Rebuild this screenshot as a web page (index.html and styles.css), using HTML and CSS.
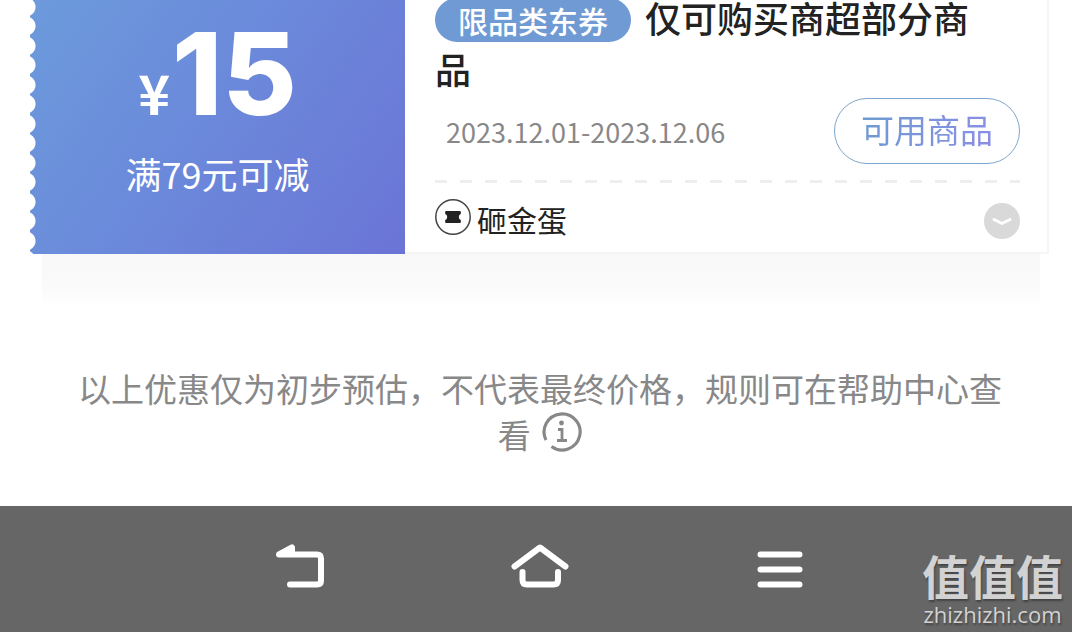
FILE: index.html
```
<!DOCTYPE html>
<html lang="zh-CN">
<head>
<meta charset="utf-8">
<meta name="viewport" content="width=device-width, initial-scale=1.0">
<title>优惠券</title>
<link rel="stylesheet" href="styles.css">
</head>
<body>

<main class="content">
  <section class="coupon">
    <div class="coupon-amount">
      <p class="price"><span class="currency">¥</span>15</p>
      <p class="condition">满79元可减</p>
    </div>
    <div class="coupon-info">
      <h2 class="title"><span class="tag">限品类东券</span>仅可购买商超部分商品</h2>
      <div class="date-row">
        <span class="date">2023.12.01-2023.12.06</span>
        <button class="use-button" type="button"><span>可用商品</span></button>
      </div>
      <div class="divider"></div>
      <div class="source-row">
        <svg class="source-icon" viewBox="0 0 36 36">
          <circle cx="18" cy="18" r="17.2" fill="none" stroke="#444" stroke-width="1.5"/>
          <path d="M11 12h14q.8 0 .8.8v2.200q-2 .6-2 3t2 3v2.200q0 .8-.8.8H11q-.8 0-.8-.8V21q2-.6 2-3t-2-3v-2.200q0-.8.8-.8z" fill="#222"/>
        </svg>
        <span class="source">砸金蛋</span>
        <button class="expand" type="button" aria-label="展开">
          <svg viewBox="0 0 36 36"><path d="M10 16.500l8 4 8-4" fill="none" stroke="#fff" stroke-width="3" stroke-linecap="round" stroke-linejoin="round"/></svg>
        </button>
      </div>
    </div>
  </section>
  <div class="coupon-shadow"></div>

  <p class="note">以上优惠仅为初步预估，不代表最终价格，规则可在帮助中心查看
    <svg class="info-icon" viewBox="0 0 40 40">
      <path d="M4 28A18 18 0 1 1 9.500 34.500" fill="none" stroke="#888" stroke-width="3.200"/>
      <circle cx="19.500" cy="11" r="2.400" fill="#888"/>
      <path d="M16 17.500h4v10.500M15 28.500h10" fill="none" stroke="#888" stroke-width="2.800"/>
    </svg>
  </p>
</main>

<nav class="navbar">
  <button class="nav-button" type="button" aria-label="返回">
    <svg viewBox="0 0 60 60"><path d="M20 41.500h27q4 0 4-4v-22q0-4-4-4H9L22 4.500V10"/></svg>
  </button>
  <button class="nav-button" type="button" aria-label="主页">
    <svg viewBox="0 0 60 60"><path d="M4.500 23.500L30 4.500l25.500 19M12.500 29v8q0 4.500 4.500 4.500h26.500q4.500 0 4.500-4.500v-8"/></svg>
  </button>
  <button class="nav-button" type="button" aria-label="菜单">
    <svg viewBox="0 0 60 60"><path d="M10.500 11.500h39M10.500 26.500h39M10.500 41.500h39"/></svg>
  </button>
  <div class="watermark">
    <span class="watermark-name">值值值</span>
    <span class="watermark-site">zhizhizhi.com</span>
  </div>
</nav>

</body>
</html>
```
FILE: styles.css
```
* {
  box-sizing: border-box;
}

body {
  margin: 0;
  min-height: 100vh;
  display: flex;
  flex-direction: column;
  overflow: hidden;
  background-color: #fff;
  color: #222;
  font-family: "Noto Sans CJK SC", sans-serif;
}

p,
h2 {
  margin: 0;
}

button {
  border: none;
  padding: 0;
  background: none;
  font-family: inherit;
  cursor: pointer;
}

svg {
  display: block;
}

.content {
  flex: 1;
}

/* the top of the coupon is scrolled out of view */
.coupon {
  display: flex;
  margin: -8px 23px 0 30px;
}

/* white circles make the torn left edge */
.coupon-amount {
  width: 375px;
  flex-shrink: 0;
  padding-top: 24px;
  text-align: center;
  color: #fff;
  background:
    radial-gradient(circle at -4px 10px, #fff 9px, transparent 10px) 0 5px / 12px 39px repeat-y,
    radial-gradient(circle at -4px 29px, #fff 9px, transparent 10px) 0 5px / 12px 39px repeat-y,
    linear-gradient(125deg, #6c9bdc 0%, #6b86da 55%, #6b74d6 100%);
}

.price {
  font: 800 114px/116px Inter, sans-serif;
}

.currency {
  margin-right: 2px;
  font: 700 54px/54px "Noto Sans CJK SC", sans-serif;
}

.condition {
  margin-top: 14px;
  font-size: 36px;
  line-height: 54px;
}

.coupon-info {
  flex: 1;
  padding: 0 27px 11px 30px;
  border-right: 2px solid #f5f5f5;
  border-bottom: 2px solid #f5f5f5;
}

.title {
  padding-right: 20px;
  font-size: 36px;
  line-height: 51px;
  font-weight: 500;
}

.tag {
  display: inline-block;
  margin-right: 14px;
  padding: 0 23px;
  border-radius: 22px;
  background-color: #6f9ad3;
  color: #fff;
  font-size: 30px;
  line-height: 44px;
}

.date-row {
  display: flex;
  align-items: center;
  justify-content: space-between;
  margin-top: 4px;
  padding-left: 11px;
}

.date {
  color: #888;
  font-size: 27px;
}

.use-button {
  height: 66px;
  padding: 0 26px 4px;
  border: 1px solid #7fa6cc;
  border-radius: 33px;
  font-size: 33px;
}

.use-button span {
  background: linear-gradient(110deg, #6c9bd2, #8b8ee6);
  background-clip: text;
  color: transparent;
}

.divider {
  height: 3px;
  margin-top: 16px;
  background: repeating-linear-gradient(90deg, #eee 0, #eee 12px, transparent 12px, transparent 25px);
}

.source-row {
  display: flex;
  align-items: center;
  margin-top: 14px;
}

.source-icon {
  width: 36px;
  height: 36px;
  margin-bottom: 4px;
}

.source {
  margin-left: 6px;
  font-size: 30px;
  line-height: 44px;
}

.expand {
  width: 36px;
  height: 36px;
  margin-top: 4px;
  margin-left: auto;
  border-radius: 50%;
  background-color: #d9d9d9;
}

.coupon-shadow {
  height: 52px;
  margin: 0 32px 0 42px;
  background: linear-gradient(#f8f8f8, #fafafa 60%, #fff);
}

.note {
  padding: 59px 66px 0 74px;
  text-align: center;
  color: #888;
  font-size: 33px;
  line-height: 46px;
}

.info-icon {
  display: inline-block;
  width: 40px;
  height: 40px;
  margin-left: 4px;
  vertical-align: -4px;
}

.navbar {
  position: relative;
  display: flex;
  justify-content: center;
  gap: 180px;
  height: 126px;
  padding: 37px 0 0 8px;
  background-color: #666;
}

.nav-button,
.nav-button svg {
  width: 60px;
  height: 60px;
}

.nav-button path {
  fill: none;
  stroke: #fff;
  stroke-width: 6;
  stroke-linecap: round;
  stroke-linejoin: round;
}

.watermark {
  position: absolute;
  right: 9px;
  bottom: 4px;
  display: flex;
  flex-direction: column;
  align-items: center;
  color: #d2d2d2;
  text-shadow: 1px 2px 2px #444;
}

.watermark-name {
  font-size: 47px;
  font-weight: 700;
  line-height: 50px;
}

.watermark-site {
  font: 22px/28px "Open Sans", sans-serif;
}
```
